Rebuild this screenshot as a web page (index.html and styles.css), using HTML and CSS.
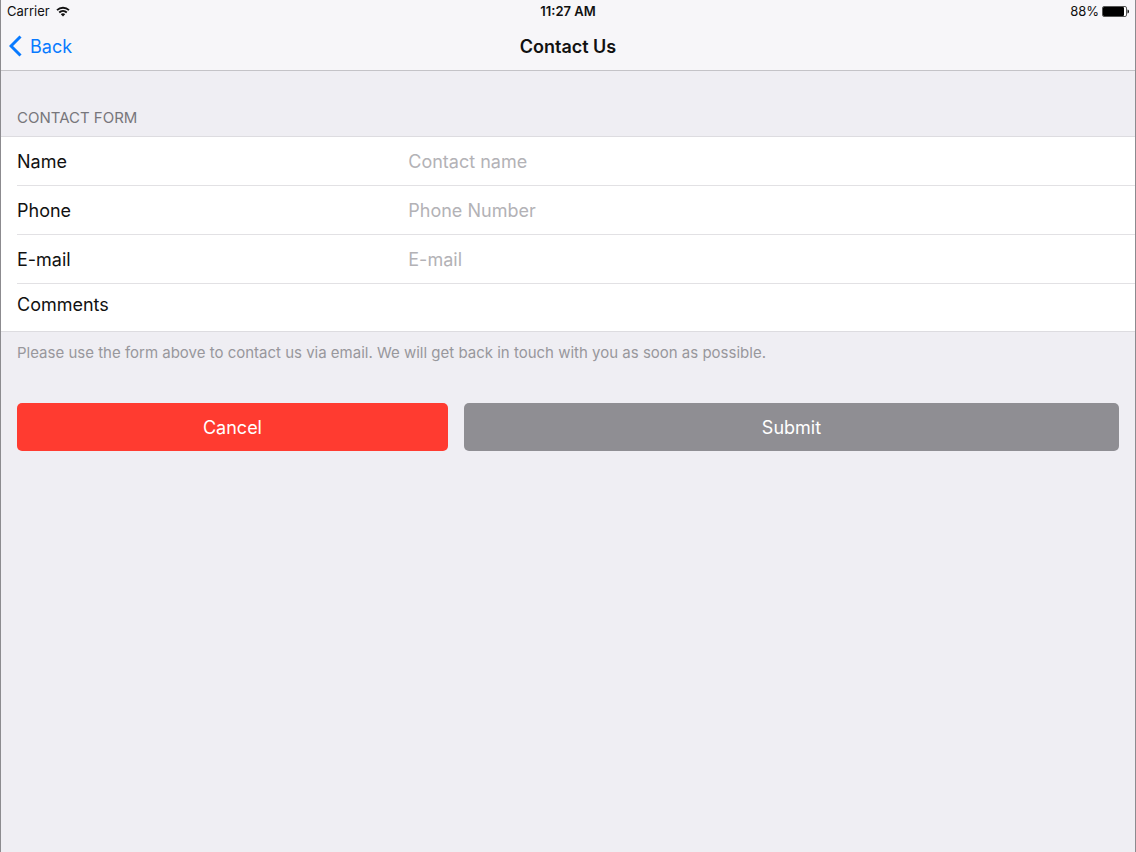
FILE: index.html
```
<!DOCTYPE html>
<html lang="en">
<head>
    <meta charset="UTF-8">
    <meta name="viewport" content="width=device-width, initial-scale=1.0">
    <title>Contact Us</title>
    <link rel="stylesheet" href="styles.css">
</head>
<body>

<header class="top">
    <div class="status-bar">
        <div class="carrier">
            <span>Carrier</span>
            <svg width="14" height="11" viewBox="0 0 14 11" fill="none" stroke="#111" stroke-width="1.8">
                <path d="M1 4.2C4.4 .9 9.6 .9 13 4.2"/>
                <path d="M3.2 6.5C5.4 4.4 8.6 4.4 10.8 6.5"/>
                <path d="M7 10.4L4.8 8.2C6 7 8 7 9.2 8.2Z" fill="#111" stroke="none"/>
            </svg>
        </div>
        <div class="time">11:27 AM</div>
        <div class="battery">
            <span>88%</span>
            <svg width="27" height="11" viewBox="0 0 27 11">
                <rect x=".5" y=".5" width="24" height="10" rx="1.5" fill="#fff" stroke="#555"/>
                <rect x="1" y="1" width="21" height="9" rx="1" fill="#000"/>
                <path d="M25.5 3.5C27.5 4 27.5 7 25.5 7.5Z" fill="#111"/>
            </svg>
        </div>
    </div>
    <nav class="nav-bar">
        <a class="back" href="#">
            <svg width="13" height="22" viewBox="0 0 13 22" fill="none" stroke="#087aff" stroke-width="3">
                <path d="M11.5 1.5L2 11L11.5 20.5"/>
            </svg>
            Back
        </a>
        <h1>Contact Us</h1>
    </nav>
</header>

<main>
    <form>
        <h2>CONTACT FORM</h2>
        <div class="fields">
            <div class="row">
                <label for="name">Name</label>
                <input type="text" id="name" placeholder="Contact name">
            </div>
            <div class="row">
                <label for="phone">Phone</label>
                <input type="tel" id="phone" placeholder="Phone Number">
            </div>
            <div class="row">
                <label for="email">E-mail</label>
                <input type="email" id="email" placeholder="E-mail">
            </div>
            <div class="row comments">
                <label for="comments">Comments</label>
                <textarea id="comments" rows="1"></textarea>
            </div>
        </div>
        <p class="note">Please use the form above to contact us via email. We will get back in touch with you as soon as possible.</p>
        <div class="button-container">
            <button type="button" class="cancel-button">Cancel</button>
            <button type="button" class="submit-button">Submit</button>
        </div>
    </form>
</main>

</body>
</html>
```
FILE: styles.css
```
* {
    box-sizing: border-box;
}

body {
    margin: 0;
    min-height: 100vh;
    border-left: 1px solid #8c8b8f;
    border-right: 1px solid #8c8b8f;
    background-color: #efeef3;
    color: #111;
    font-family: Inter, "Liberation Sans", sans-serif;
    font-size: 18px;
}

.top {
    background-color: #f7f6f9;
    border-bottom: 1px solid #c4c3c7;
}

.status-bar,
.nav-bar {
    display: grid;
    grid-template-columns: 1fr auto 1fr;
    align-items: center;
}

.status-bar {
    height: 22px;
    padding: 0 6px;
    font-size: 13px;
}

.carrier,
.battery {
    display: flex;
    align-items: center;
    gap: 6px;
}

.battery {
    justify-content: flex-end;
    gap: 3px;
}

.time {
    font-weight: 600;
}

.nav-bar {
    height: 48px;
    padding: 0 8px;
}

.back {
    display: flex;
    align-items: center;
    gap: 8px;
    color: #087aff;
    text-decoration: none;
}

h1 {
    margin: 0;
    font-size: 18px;
    font-weight: 600;
}

h2 {
    margin: 0;
    padding: 37px 16px 8px;
    color: #77767b;
    font-size: 15px;
    font-weight: 400;
    line-height: 20px;
}

.fields {
    padding-left: 16px;
    background-color: #fff;
    border-top: 1px solid #dddce0;
    border-bottom: 1px solid #dddce0;
}

.row {
    display: grid;
    grid-template-columns: 35% 1fr;
    align-items: center;
    height: 49px;
    border-bottom: 1px solid #e2e1e4;
}

.row:last-child {
    border-bottom: none;
}

.row.comments {
    height: 47px;
    padding-bottom: 6px;
}

input,
textarea {
    width: 100%;
    height: 24px;
    padding: 0;
    border: none;
    outline: none;
    resize: none;
    background: none;
    color: #111;
    font: inherit;
}

input::placeholder {
    color: #b3b2b6;
}

.note {
    margin: 0;
    padding: 11px 16px 0;
    color: #98979c;
    font-size: 15px;
    line-height: 20px;
}

.button-container {
    display: grid;
    grid-template-columns: 25fr 38fr;
    gap: 16px;
    padding: 40px 16px;
}

button {
    height: 48px;
    border: none;
    border-radius: 5px;
    color: #fff;
    font: inherit;
    cursor: pointer;
}

.cancel-button {
    background-color: #ff3b30;
}

.submit-button {
    background-color: #8f8e93;
}
```
